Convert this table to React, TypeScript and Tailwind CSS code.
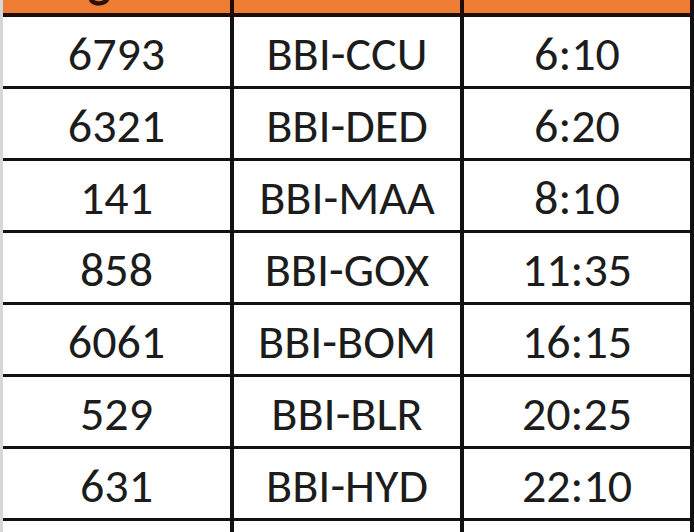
const flights = [
  { no: "6793", route: "BBI-CCU", time: "6:10" },
  { no: "6321", route: "BBI-DED", time: "6:20" },
  { no: "141", route: "BBI-MAA", time: "8:10" },
  { no: "858", route: "BBI-GOX", time: "11:35" },
  { no: "6061", route: "BBI-BOM", time: "16:15" },
  { no: "529", route: "BBI-BLR", time: "20:25" },
  { no: "631", route: "BBI-HYD", time: "22:10" },
  { no: "", route: "", time: "" },
];

const cols = "grid grid-cols-[231px_230px_230px]";

function Cell({ children, head, className = "" }: { children: React.ReactNode; head?: boolean; className?: string }) {
  return (
    <div
      className={
        (head
          ? "flex items-end justify-center border-r-4 border-[#1e0c06] pb-[8px] "
          : "flex items-center justify-center border-r-4 border-[#111] pt-[5px] ") + className
      }
    >
      <span className="inline-block">{children}</span>
    </div>
  );
}

export default function App() {
  return (
    <div className="h-[532px] w-[694px] overflow-hidden bg-white font-['Carlito','Lato',sans-serif] text-[48px] leading-none text-[#1c1c1c]">
      <div className="-mt-[55px] border-l-[3px] border-[#d6d6d6]">
        {/* Header row, mostly cropped */}
        <div className={`${cols} h-[72px] border-b-4 border-[#1e0c06] bg-[#ec7d33] font-bold text-[#2a1008]`}>
          <Cell head className="pl-[30px]">Flight No</Cell>
          <Cell head>Route</Cell>
          <Cell head>Time</Cell>
        </div>

        {flights.map((f, i) => (
          <div key={i} className={`${cols} h-[72px] border-b-[3px] border-[#111]`}>
            <Cell>{f.no}</Cell>
            <Cell>{f.route}</Cell>
            <Cell>{f.time}</Cell>
          </div>
        ))}
      </div>
    </div>
  );
}
